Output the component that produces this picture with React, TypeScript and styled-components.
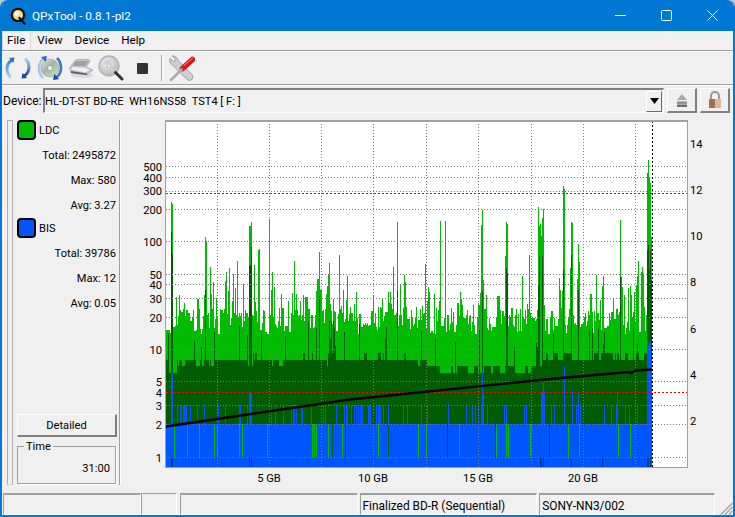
import React from "react";
import styled, { createGlobalStyle } from "styled-components";

const FONT = `Roboto, "Open Sans", sans-serif`;

const Global = createGlobalStyle`
  html, body { margin: 0; padding: 0; background: #b9c8d6; }
  body { font-family: ${FONT}; font-size: 12px; color: #000; }
  * { box-sizing: border-box; }
`;

const Window = styled.div`
  width: 735px; height: 517px; background: #f0f0f0; display: flex; flex-direction: column;
  border: solid #0078d4; border-width: 0 2px 2px; border-radius: 8px 8px 0 0; overflow: hidden;
`;
const TitleBar = styled.div`
  height: 31px; margin: 0 -2px; background: #0078d4; color: #fff; font-size: 11.8px;
  display: flex; align-items: center; padding-left: 10px; flex: none;
`;
const TitleText = styled.span` margin-left: 5px; flex: 1; `;
const WinBtn = styled.div` width: 46px; height: 31px; display: flex; align-items: center; justify-content: center; `;
const MenuBar = styled.div`
  height: 20px; flex: none; display: flex; align-items: stretch; padding: 1px 0 0 0;
  border-bottom: 1px solid #a0a0a0; box-shadow: 0 1px 0 #fff; font-size: 11.7px;
`;
const MenuItem = styled.div<{ $active?: boolean }>`
  padding: 0 6px 1px 6px; line-height: 17px;
  ${p => p.$active ? "background:#f4f4f4; border-right:1px solid #d8d8d8; border-left:1px solid #d8d8d8; padding-left:4px; padding-right:5px;" : ""}
`;
const Toolbar = styled.div`
  height: 33px; margin-top: 1px; flex: none; display: flex; align-items: center; padding-left: 3px;
  border-bottom: 1px solid #a0a0a0; box-shadow: 0 1px 0 #fff;
`;
const ToolIcon = styled.div<{ $w: number; $after?: number }>`
  width: ${p => p.$w}px; margin-right: ${p => p.$after ?? 5}px; height: 28px; display: flex; align-items: center; justify-content: center;
`;
const ToolSep = styled.div`
  width: 2px; height: 26px; background: #a8a8a8; border-right: 1px solid #fff; margin-right: 5px;
`;
const DeviceRow = styled.div`
  height: 29px; margin-top: 1px; flex: none; display: flex; align-items: center; padding: 0 2px 0 1px;
`;
const DeviceLabel = styled.span` width: 40px; `;
const Combo = styled.div`
  width: 621px; height: 25px; border: solid; border-width: 2px 1px 1px 2px; font-size: 11.1px;
  border-color: #808080 #fff #fff #808080; display: flex; align-items: center; padding: 0 1px 0 0;
`;
const ComboText = styled.span` flex: 1; white-space: pre; `;
const ComboBtn = styled.div`
  width: 16px; height: 21px; background: #f0f0f0; display: flex; align-items: center; justify-content: center;
  border: solid 1px; border-color: #fff #696969 #696969 #fff;
`;
const SideBtn = styled.div`
  width: 30px; height: 25px; margin-left: 3px; display: flex; align-items: center; justify-content: center;
  border: solid; border-width: 1px 2px 2px 1px; border-color: #fff #808080 #808080 #fff;
  &:first-of-type { margin-left: 4px; }
`;
const Main = styled.div` flex: 1; min-height: 0; display: flex; padding: 1px 0 0 5px; `;
const Handle = styled.div`
  width: 6px; height: 365px; margin-top: 4px; border: solid #b0b0b0; border-width: 1px; border-bottom-color: #d8d8d8;
`;
const Panel = styled.div`
  width: 107px; height: 365px; margin-top: 4px; display: flex; flex-direction: column; padding: 0 3px 0 4px;
  border-right: 1px solid #a0a0a0; box-shadow: 1px 0 0 #fff; font-size: 11.1px;
`;
const Legend = styled.div` height: 20px; display: flex; align-items: center; gap: 3px; `;
const Swatch = styled.div<{ $c: string }>`
  width: 19px; height: 20px; border: 2px solid #000; border-radius: 4px; background: ${p => p.$c};
`;
const Stat = styled.div<{ $first?: boolean }>`
  height: 25px; line-height: 25px; text-align: right; margin-top: ${p => (p.$first ? 3 : 0)}px;
`;
const Spacer = styled.div` flex: 1; `;
const DetailBtn = styled.div`
  width: 100px; height: 23px; flex: none; text-align: center; line-height: 21px;
  border: solid; border-width: 1px 2px 2px 1px; border-color: #fff #808080 #808080 #fff;
`;
const TimeBox = styled.fieldset`
  width: 99px; height: 44px; flex: none; margin: 3px 0 1px 0; padding: 0 5px 0 6px; border: 1px solid #a0a0a0;
  box-shadow: 1px 1px 0 #fff; text-align: right; line-height: 32px;
`;
const TimeLegend = styled.legend` padding: 0 2px; text-align: left; line-height: 13px; `;
const Plot = styled.svg` display: block; flex: none; margin-left: 2px; `;
const StatusBar = styled.div`
  height: 22px; flex: none; display: flex; padding-left: 1px; align-items: stretch; font-size: 11.9px;
`;
const StatusCell = styled.div<{ $w: number; $gap?: number; $soft?: boolean }>`
  width: ${p => p.$w}px; margin-right: ${p => p.$gap ?? 0}px; line-height: 22px; padding-left: 2px;
  border: solid; border-width: ${p => (p.$soft ? "1px" : "2px")} 1px 1px 1px;
  border-color: #a0a0a0 #fff #fff #a0a0a0; white-space: nowrap;
`;
const Grip = styled.svg` align-self: flex-end; margin-left: 5px; display: block; `;

/* ---------- chart data ---------- */
function rng(seed: number) {
  return () => {
    seed |= 0; seed = (seed + 0x6d2b79f5) | 0;
    let t = Math.imul(seed ^ (seed >>> 15), 1 | seed);
    t = (t + Math.imul(t ^ (t >>> 7), 61 | t)) ^ t;
    return ((t ^ (t >>> 14)) >>> 0) / 4294967296;
  };
}
const SPIKES: Record<number, number> = {
  171: 202, 172: 204, 176: 297, 205: 237, 206: 241, 210: 267, 211: 294, 213: 282, 225: 281, 226: 272, 228: 291, 229: 268,
  233: 274, 235: 288, 237: 261, 243: 284, 249: 226, 250: 226, 251: 222, 254: 265, 258: 250, 259: 249, 269: 219, 271: 290,
  272: 272, 274: 287, 294: 261, 296: 294, 317: 279, 318: 279, 319: 252, 329: 292, 339: 255, 347: 276, 356: 292, 390: 292,
  393: 267, 397: 222, 400: 284, 404: 275, 405: 282, 425: 264, 440: 221, 445: 221, 460: 292, 481: 225, 482: 210, 483: 280,
  486: 295, 505: 256, 506: 222, 507: 224, 522: 276, 529: 255, 538: 207, 539: 226, 540: 224, 541: 236, 542: 218, 543: 209,
  559: 278, 560: 290, 563: 186, 564: 189, 570: 268, 571: 222, 572: 223, 577: 279, 578: 244, 579: 262, 591: 297, 596: 275,
  602: 286, 603: 276, 620: 220, 621: 277, 624: 295, 628: 288, 630: 286, 634: 292, 636: 285, 637: 276, 638: 261, 641: 272,
  642: 267, 643: 273, 647: 173, 648: 160, 649: 177, 650: 183, 651: 237,
};
const DARK_SPIKES: Record<number, number> = {
  171: 232, 172: 254, 205: 290, 249: 266, 250: 265, 251: 247, 319: 296, 397: 291, 482: 291, 506: 268, 507: 273, 538: 285, 539: 256,
  542: 256, 563: 270, 571: 255, 578: 290, 620: 277, 647: 250, 648: 245, 649: 270, 650: 250, 651: 280,
};
const BLUE_TALL: Record<number, number> = {
  171: 373, 172: 373, 249: 392, 250: 392, 251: 392, 482: 373, 483: 392, 541: 392, 542: 392, 543: 382, 544: 392, 564: 366, 572: 392, 578: 392,
  617: 392, 647: 340, 648: 345, 649: 342, 650: 342, 651: 360,
};
const DARK_BLUE = new Set([171, 172, 249, 251, 540, 541, 543, 571, 602, 647, 648, 650]);

function darkBase(x: number, r: () => number) {
  if (x < 175) return 373;
  if (x < 205) return r() < 0.5 ? 366 : 360;
  if (x < 350) return r() < 0.75 ? 360 : r() < 0.6 ? 353 : 366;
  if (x < 415) return r() < 0.85 ? 360 : 353;
  if (x < 440) return r() < 0.7 ? 366 : 360;
  if (x < 480) return r() < 0.8 ? 373 : 366;
  if (x < 540) return r() < 0.6 ? 366 : 373;
  return r() < 0.7 ? 360 : 353;
}

function buildChart() {
  const r = rng(91);
  const paths = { light: "", dark: "", blue: "", navy: "" };
  const add = (k: keyof typeof paths, x: number, y1: number, y2: number) => {
    if (y2 > y1) paths[k] += `M${x} ${y1}h1V${y2}h-1z`;
  };
  let prev = 320;
  let prevDark = 360;
  for (let x = 166; x < 652; x++) {
    let top = r() < 0.25 ? prev : 308 + 26 * Math.pow(r(), 1.3);
    if (r() < 0.3) top -= r() * 25;
    prev = top;
    top = Math.min(top, SPIKES[x] ?? 999);
    if (x < 170) top = 330;
    let dk = r() < 0.5 ? prevDark : darkBase(x, r);
    prevDark = dk;
    if (r() < 0.07) dk = Math.max(top + 4, 318 + r() * 30);
    dk = Math.min(dk, DARK_SPIKES[x] ?? 999);
    add("light", x, Math.round(top), 424);
    add("dark", x, Math.round(dk), 424);
    const early = x < 380;
    const t = r();
    if (BLUE_TALL[x] !== undefined) {
      add("blue", x, BLUE_TALL[x], 424);
    } else if (t < (early ? 0.2 : 0.08)) {
      add("blue", x, 405, 424);
    } else if (t < (early ? 0.42 : 0.11)) {
      add("light", x, 405, 424);
    } else if (t > 0.985) {
      add("light", x, 392, 405);
    }
    const s = r();
    if (s < 0.045 && x > 172) {
      add("light", x, 424, 457);
      add("blue", x, 457, 467);
    } else if (s < 0.06 && x > 172) {
      add("dark", x, 424, 457);
      add("blue", x, 457, 467);
    } else {
      add("blue", x, 424, 467);
    }
    if (DARK_BLUE.has(x)) add("navy", x, 457, 467);
  }
  return paths;
}
const CHART = buildChart();
const H_GRID = [166, 177, 191, 209, 241, 274, 284, 298, 317, 349, 381, 405, 424, 457];
const V_GRID = [217, 269, 321, 373, 426, 478, 531, 583, 635];
const LEFT = [[500, 167], [400, 178], [300, 191], [200, 210], [100, 242], [50, 275], [40, 285], [30, 299], [20, 318], [10, 350], [5, 382], [4, 393], [3, 406], [2, 425], [1, 458]];
const RIGHT = [[14, 144], [12, 190], [10, 236], [8, 282], [6, 329], [4, 375], [2, 421]];
const BOTTOM: [string, number][] = [["5 GB", 269], ["10 GB", 373], ["15 GB", 478], ["20 GB", 583]];

function Chart() {
  return (
    <Plot width={611} height={374} viewBox="122 116 611 374" fontFamily={FONT} fontSize="11.2">
      <rect x="166" y="121" width="521" height="346" fill="#fff" />
      <g shapeRendering="crispEdges">
        <path d={CHART.light} fill="#00bb00" />
        <path d={CHART.dark} fill="#005c00" />
        <path d={CHART.blue} fill="#0055ff" />
        <path d={CHART.navy} fill="#003a9e" />
        {H_GRID.map(y => <line key={y} x1="166" x2="687" y1={y + 0.5} y2={y + 0.5} stroke="#7c7c7c" strokeDasharray="1 2" />)}
        {V_GRID.map(x => <line key={x} x1={x + 0.5} x2={x + 0.5} y1="121" y2="467" stroke="#7c7c7c" strokeDasharray="1 2" />)}
        <line x1="166" x2="687" y1="193.5" y2="193.5" stroke="#e8001c" strokeDasharray="2 2" />
        <line x1="166" x2="687" y1="392.5" y2="392.5" stroke="#ff0000" strokeDasharray="2 2" />
        <line x1="652.5" x2="652.5" y1="121" y2="467" stroke="#000" strokeDasharray="2 2" />
        <path d="M165 120H688V468H165Z M166 122V467H687V122Z" fill="#a0a0a0" fillRule="evenodd" />
      </g>
      <polyline points="166,426.5 350,399.5 550,379 628,372 631,373 636,370.5 652,369.5" fill="none" stroke="#000" strokeWidth="2.4" />
      {LEFT.map(([v, y]) => <text key={v} x="162" y={y + 4} textAnchor="end">{v}</text>)}
      {RIGHT.map(([v, y]) => <text key={v} x="690" y={y + 4}>{v}</text>)}
      {BOTTOM.map(([t, x]) => <text key={t} x={x} y="482" textAnchor="middle">{t}</text>)}
    </Plot>
  );
}

/* ---------- icons ---------- */
const Arrows = () => (
  <svg width="26" height="26" viewBox="0 0 26 26">
    <defs>
      <linearGradient id="ar1" x1="0" y1="0" x2="0" y2="1"><stop offset="0" stopColor="#3c7cc8" /><stop offset="1" stopColor="#b4d2ee" /></linearGradient>
      <linearGradient id="ar2" x1="0" y1="0" x2="0" y2="1"><stop offset="0" stopColor="#b6d2ee" /><stop offset="1" stopColor="#14469c" /></linearGradient>
    </defs>
    <path d="M7 5 C0.5 9 0.5 18 6 22.5" fill="none" stroke="url(#ar1)" strokeWidth="3" />
    <path d="M4 3 L9.5 2.4 L8.4 8Z" fill="#2e6cc0" />
    <path d="M19 21 C25.5 17 25.5 8 20 3.5" fill="none" stroke="url(#ar2)" strokeWidth="3" />
    <path d="M22 23 L16.5 23.6 L17.6 18Z" fill="#14469c" />
  </svg>
);
const DiscIcon = () => (
  <svg width="26" height="26" viewBox="0 0 26 26">
    <defs>
      <linearGradient id="dc" x1="0" y1="0" x2="1" y2="1"><stop offset="0" stopColor="#e8e8e8" /><stop offset=".45" stopColor="#a8b0a8" /><stop offset=".55" stopColor="#9ccc9c" /><stop offset="1" stopColor="#d8d8e4" /></linearGradient>
    </defs>
    <circle cx="13" cy="13" r="9" fill="url(#dc)" stroke="#9a9a9a" strokeWidth=".6" />
    <circle cx="13" cy="13" r="2.6" fill="#f0f0f0" stroke="#8a8a8a" strokeWidth=".6" />
    <path d="M7 3.5 C1 7 0 17 6 23" fill="none" stroke="#a4c6ea" strokeWidth="2.6" />
    <path d="M4 2 L10 1 L8.6 7Z" fill="#2c68bd" />
    <path d="M19 22.5 C25 19 26 9 20 3" fill="none" stroke="#3d78c6" strokeWidth="2.6" />
    <path d="M22 24 L16 25 L17.4 19Z" fill="#174c9e" />
  </svg>
);
const DriveIcon = () => (
  <svg width="26" height="22" viewBox="0 0 26 22">
    <ellipse cx="14" cy="18.5" rx="11.5" ry="2.6" fill="#dcdcdc" />
    <path d="M1.5 11 L7 3.5 Q8 2.5 10 2.5 H21 Q22.5 3 21.5 5 L18 10 L25 13 L19 18 L3 16Z" fill="#c4c8cc" stroke="#8a9098" strokeWidth=".5" />
    <path d="M7.5 4 H21 L17 9 H4.5Z" fill="#98a2ac" />
    <path d="M3 12.5 L17 15.5 L22 13 L18 11 L5 10Z" fill="#eef0f2" />
    <path d="M3 16 L19 18 L19 16.4 L3 14Z" fill="#5c6066" />
  </svg>
);
const LensIcon = () => (
  <svg width="26" height="26" viewBox="0 0 26 26">
    <defs>
      <radialGradient id="ln" cx=".4" cy=".35" r=".7"><stop offset="0" stopColor="#f4f4f4" /><stop offset=".5" stopColor="#ccd2cc" /><stop offset="1" stopColor="#b4b4b4" /></radialGradient>
    </defs>
    <circle cx="11" cy="11" r="10" fill="url(#ln)" stroke="#b4b4b4" strokeWidth="1.4" />
    <path d="M5 9 Q8 4 13 5 L11 10Z" fill="#c4d2ea" />
    <path d="M13 5 Q16 6 17 9 L12 11Z" fill="#e8cfcb" />
    <circle cx="11" cy="11" r="2" fill="#eee" stroke="#999" strokeWidth=".5" />
    <path d="M17.5 17.5 L24 24" stroke="#333" strokeWidth="3" strokeLinecap="round" />
  </svg>
);
const ToolsIcon = () => (
  <svg width="27" height="27" viewBox="0 0 27 27">
    <path d="M2 3.5 Q0.5 8 4.5 10 L19 24.5 Q21.5 26.5 24 24.5 Q26 22 24 19.5 L10 5.5 Q9 1 4 .8 L7.5 4.2 L6 7Z" fill="#ccd0d4" stroke="#82868a" strokeWidth=".7" />
    <path d="M24.5 4.5 L14.5 13.5" stroke="#d9141c" strokeWidth="5.6" strokeLinecap="round" />
    <path d="M25 2.8 L15.5 11" stroke="#f59498" strokeWidth="1" />
    <path d="M13.5 14.5 L3 25" stroke="#a8acb0" strokeWidth="2.6" strokeLinecap="round" />
  </svg>
);
const QLogo = () => (
  <svg width="17" height="18" viewBox="0 0 17 18">
    <circle cx="8" cy="8" r="7.3" fill="#111" />
    <circle cx="8" cy="8" r="5" fill="#f6d98a" />
    <circle cx="6.8" cy="6.6" r="2.4" fill="#fff8e4" />
    <path d="M9.5 11 L14.5 16.5" stroke="#111" strokeWidth="2.4" strokeLinecap="round" />
  </svg>
);

export default function App() {
  return (
    <>
      <Global />
      <Window>
        <TitleBar>
          <QLogo />
          <TitleText>QPxTool - 0.8.1-pl2</TitleText>
          <WinBtn>
            <svg width="11" height="11" viewBox="0 0 11 11"><path d="M0 5.5H11" stroke="#fff" /></svg>
          </WinBtn>
          <WinBtn>
            <svg width="11" height="11" viewBox="0 0 11 11"><rect x=".5" y=".5" width="10" height="10" rx="1" fill="none" stroke="#fff" /></svg>
          </WinBtn>
          <WinBtn>
            <svg width="11" height="11" viewBox="0 0 11 11"><path d="M.5 .5L10.5 10.5M10.5 .5L.5 10.5" stroke="#fff" /></svg>
          </WinBtn>
        </TitleBar>
        <MenuBar>
          <MenuItem $active>File</MenuItem>
          <MenuItem>View</MenuItem>
          <MenuItem>Device</MenuItem>
          <MenuItem>Help</MenuItem>
        </MenuBar>
        <Toolbar>
          <ToolIcon $w={26} $after={6}><Arrows /></ToolIcon>
          <ToolIcon $w={26} $after={4}><DiscIcon /></ToolIcon>
          <ToolIcon $w={27} $after={4}><DriveIcon /></ToolIcon>
          <ToolIcon $w={26} $after={12}><LensIcon /></ToolIcon>
          <ToolIcon $w={12} $after={13}>
            <svg width="11" height="11" viewBox="0 0 11 11"><rect width="11" height="11" rx="1" fill="#333" /></svg>
          </ToolIcon>
          <ToolSep />
          <ToolIcon $w={27}><ToolsIcon /></ToolIcon>
        </Toolbar>
        <DeviceRow>
          <DeviceLabel>Device:</DeviceLabel>
          <Combo>
            <ComboText>HL-DT-ST BD-RE  WH16NS58  TST4 [ F: ]</ComboText>
            <ComboBtn>
              <svg width="9" height="6" viewBox="0 0 9 6"><path d="M0 0H9L4.5 6Z" fill="#000" /></svg>
            </ComboBtn>
          </Combo>
          <SideBtn>
            <svg width="12" height="13" viewBox="0 0 12 13"><path d="M6 0L11 6H1Z" fill="#a8a8a8" /><rect x="1" y="7.5" width="10" height="2.4" fill="#8a8a8a" /><rect x="1" y="10.5" width="10" height="2.4" fill="#666" /></svg>
          </SideBtn>
          <SideBtn>
            <svg width="14" height="18" viewBox="0 0 14 18"><path d="M3 8V5a4 4 0 0 1 8 0V8" fill="none" stroke="#9a9a9a" strokeWidth="2" /><rect x="1" y="8" width="12" height="9" fill="#a5714a" /><rect x="7" y="8" width="6" height="9" fill="#d9b89a" /></svg>
          </SideBtn>
        </DeviceRow>
        <Main>
          <Handle />
          <Panel>
            <Legend><Swatch $c="#00bb00" />LDC</Legend>
            <Stat $first>Total: 2495872</Stat>
            <Stat>Max: 580</Stat>
            <Stat>Avg: 3.27</Stat>
            <Legend><Swatch $c="#0055ff" />BIS</Legend>
            <Stat $first>Total: 39786</Stat>
            <Stat>Max: 12</Stat>
            <Stat>Avg: 0.05</Stat>
            <Spacer />
            <DetailBtn>Detailed</DetailBtn>
            <TimeBox>
              <TimeLegend>Time</TimeLegend>
              31:00
            </TimeBox>
          </Panel>
          <Chart />
        </Main>
        <StatusBar>
          <StatusCell $w={138} />
          <StatusCell $w={36} $gap={3} $soft />
          <StatusCell $w={178} $gap={2} />
          <StatusCell $w={178} $gap={2}>Finalized BD-R (Sequential)</StatusCell>
          <StatusCell $w={176}>SONY-NN3/002</StatusCell>
          <Grip width="13" height="13" viewBox="0 0 13 13">
            <path d="M12.5 1L1 12.5M12.5 5L5 12.5M12.5 9L9 12.5" stroke="#a8a8a8" strokeWidth="1.4" />
          </Grip>
        </StatusBar>
      </Window>
    </>
  );
}
